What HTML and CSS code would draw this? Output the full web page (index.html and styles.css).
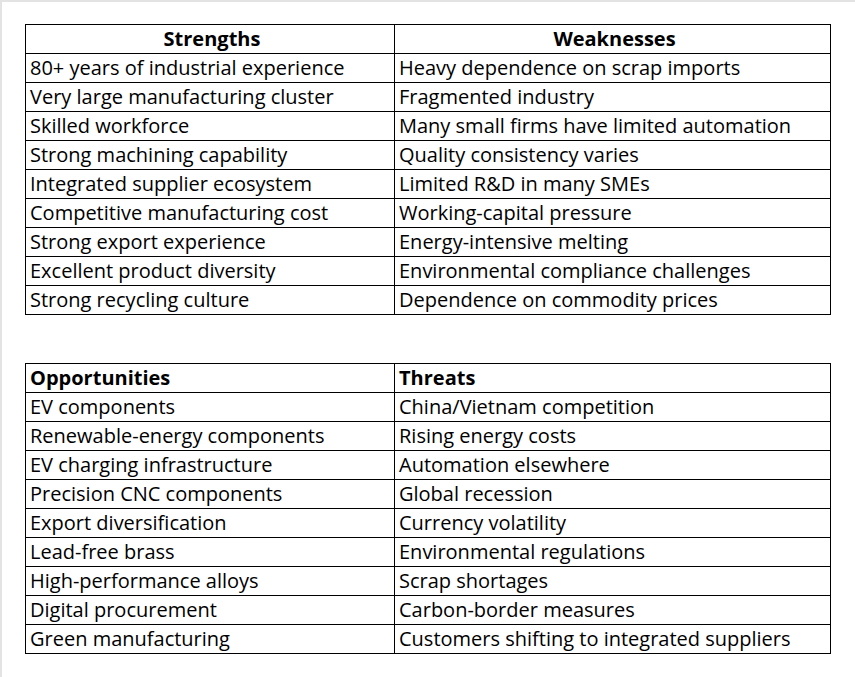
FILE: index.html
```html
<!DOCTYPE html>
<html>
<head>
<meta charset="utf-8">
<link rel="stylesheet" href="styles.css">
</head>
<body>
<div class="sheet">
  <table class="swot">
    <colgroup><col class="c1"><col class="c2"></colgroup>
    <tr class="head center"><th>Strengths</th><th>Weaknesses</th></tr>
    <tr><td>80+ years of industrial experience</td><td>Heavy dependence on scrap imports</td></tr>
    <tr><td>Very large manufacturing cluster</td><td>Fragmented industry</td></tr>
    <tr><td>Skilled workforce</td><td>Many small firms have limited automation</td></tr>
    <tr><td>Strong machining capability</td><td>Quality consistency varies</td></tr>
    <tr><td>Integrated supplier ecosystem</td><td>Limited R&amp;D in many SMEs</td></tr>
    <tr><td>Competitive manufacturing cost</td><td>Working-capital pressure</td></tr>
    <tr><td>Strong export experience</td><td>Energy-intensive melting</td></tr>
    <tr><td>Excellent product diversity</td><td>Environmental compliance challenges</td></tr>
    <tr><td>Strong recycling culture</td><td>Dependence on commodity prices</td></tr>
  </table>
  <table class="swot second">
    <colgroup><col class="c1"><col class="c2"></colgroup>
    <tr class="head"><th>Opportunities</th><th>Threats</th></tr>
    <tr><td>EV components</td><td>China/Vietnam competition</td></tr>
    <tr><td>Renewable-energy components</td><td>Rising energy costs</td></tr>
    <tr><td>EV charging infrastructure</td><td>Automation elsewhere</td></tr>
    <tr><td>Precision CNC components</td><td>Global recession</td></tr>
    <tr><td>Export diversification</td><td>Currency volatility</td></tr>
    <tr><td>Lead-free brass</td><td>Environmental regulations</td></tr>
    <tr><td>High-performance alloys</td><td>Scrap shortages</td></tr>
    <tr><td>Digital procurement</td><td>Carbon-border measures</td></tr>
    <tr><td>Green manufacturing</td><td>Customers shifting to integrated suppliers</td></tr>
  </table>
</div>
</body>
</html>
```
FILE: styles.css
```css
html, body {
  margin: 0;
  padding: 0;
  background: #ffffff;
}
.sheet {
  width: 855px;
  height: 677px;
  border-top: 2px solid #e3e3e3;
  border-left: 2px solid #e3e3e3;
  padding: 22px 0 0 23px;
  box-sizing: border-box;
  font-family: "Open Sans", "Liberation Sans", sans-serif;
  color: #000;
}
.swot {
  border-collapse: collapse;
  width: 805px;
  table-layout: fixed;
}
.swot.second {
  margin-top: 48px;
}
.c1 { width: 369px; }
.c2 { width: 436px; }
.swot th, .swot td {
  border: 1px solid #000;
  height: 29px;
  padding: 0 0 0 4px;
  font-size: 20px;
  line-height: 22px;
  letter-spacing: 0;
  text-align: left;
  vertical-align: middle;
  white-space: nowrap;
  box-sizing: border-box;
}
.swot th {
  font-weight: 700;
}
.head.center th {
  text-align: center;
}
```
